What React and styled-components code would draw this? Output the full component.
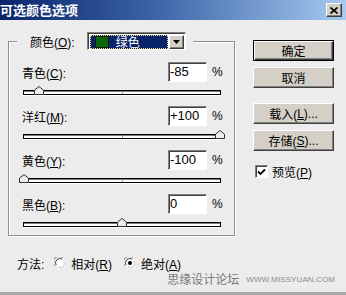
import React from 'react'
import styled, { createGlobalStyle, css } from 'styled-components'

const GlobalStyle = createGlobalStyle`
  html, body {
    margin: 0;
    padding: 0;
    background: #ececec;
  }
  body {
    font-family: "Liberation Sans", "Noto Sans CJK SC", sans-serif;
    font-size: 12px;
    color: #000;
  }
`

const Dialog = styled.div`
  width: 346px;
  height: 295px;
  box-sizing: border-box;
  background: #ececec;
  border-bottom: 3px solid #a9a9a9;
  display: flex;
  flex-direction: column;
  overflow: hidden;
`

const TitleBar = styled.div`
  height: 20px;
  flex: none;
  display: flex;
  align-items: center;
  justify-content: space-between;
  padding-right: 4px;
  background: linear-gradient(90deg, #0a246a 0%, #3c64a8 45%, #a6caf0 100%);
`

const Title = styled.span`
  color: #fff;
  font-weight: bold;
  font-size: 13px;
  font-family: "Noto Sans CJK SC", sans-serif;
  line-height: 20px;
`

const CloseButton = styled.div`
  width: 16px;
  height: 14px;
  box-sizing: border-box;
  display: flex;
  align-items: center;
  justify-content: center;
  background: #d4d0c8;
  border: 1px solid;
  border-color: #fff #404040 #404040 #fff;
  box-shadow: inset -1px -1px 0 #808080;
`

const Main = styled.div`
  display: flex;
  align-items: flex-start;
`

const LeftCol = styled.div`
  padding-left: 8px;
`

const GroupBox = styled.fieldset`
  margin: 12px 0 0;
  width: 227px;
  height: 204px;
  box-sizing: border-box;
  padding: 12px 0 0 0;
  border: 1px solid #8e8e8e;
  box-shadow: 1px 1px 0 #fff, inset 1px 1px 0 #fff;
`

const Legend = styled.legend`
  margin-left: 8px;
  padding: 0 7px 0 13px;
  background: #ececec;
  display: flex;
  align-items: center;
  gap: 12px;
  height: 18px;
`

const Select = styled.div`
  width: 99px;
  height: 18px;
  box-sizing: border-box;
  display: flex;
  align-items: center;
  padding: 1px 1px 1px 2px;
  background: #fff;
  border: 1px solid;
  border-color: #808080 #fff #fff #808080;
  box-shadow: inset 1px 1px 0 #404040;
`

const Selected = styled.div`
  flex: 1;
  height: 14px;
  box-sizing: border-box;
  display: flex;
  align-items: center;
  gap: 7px;
  padding-left: 5px;
  margin-top: 1px;
  background: #0a246a;
  outline: 1px dotted #f4e27a;
  outline-offset: -1px;
  color: #fff;
  font-family: "Noto Sans CJK SC", sans-serif;
`

const Swatch = styled.span`
  width: 14px;
  height: 12px;
  box-sizing: border-box;
  background: ${p => p.$color};
  border: 1px solid #0b1a0b;
`

const ArrowButton = styled.div`
  width: 15px;
  height: 14px;
  box-sizing: border-box;
  margin-left: 1px;
  margin-top: 1px;
  display: flex;
  align-items: center;
  justify-content: center;
  background: #d4d0c8;
  border: 1px solid;
  border-color: #fff #404040 #404040 #fff;
  box-shadow: inset -1px -1px 0 #808080;
`

const Row = styled.div`
  margin-left: 13px;
  width: 199px;
  height: 44px;
`

const RowHead = styled.div`
  display: grid;
  grid-template-columns: 146px 39px auto;
  align-items: center;
  height: 20px;
`

const NumberBox = styled.div`
  height: 20px;
  box-sizing: border-box;
  padding: 1px 0 0 1px;
  background: #fff;
  border: 1px solid;
  border-color: #808080 #fff #fff #808080;
  box-shadow: inset 1px 1px 0 #404040;
  font-size: 13px;
  line-height: 16px;
`

const Percent = styled.span`
  margin-left: 5px;
`

const Track = styled.div`
  position: relative;
  margin-top: 8px;
  margin-left: 1px;
  width: 198px;
  height: 5px;
  box-sizing: border-box;
  background: #fff;
  border: 1px solid #000;
  box-shadow: inset 0 1px 0 #7a7a7a, 0 1px 0 #fff;

  &::after {
    content: '';
    position: absolute;
    left: 50%;
    top: 0;
    bottom: 0;
    width: 1px;
    background: #9a9a9a;
  }
`

const Thumb = styled.div`
  position: absolute;
  bottom: -1px;
  width: 10px;
  height: 9px;
  transform: translateX(-50%);
  z-index: 1;
  svg { display: block; }
`

const SideBar = styled.div`
  margin-left: 18px;
  padding-top: 20px;
  width: 81px;
  display: flex;
  flex-direction: column;
`

const Button = styled.div`
  width: 81px;
  height: 21px;
  box-sizing: border-box;
  margin-top: ${p => p.$gap || 0}px;
  display: flex;
  align-items: center;
  justify-content: center;
  background: #d4d0c8;
  font-size: 12px;
  border: 1px solid;
  border-color: #fff #404040 #404040 #fff;
  box-shadow: inset -1px -1px 0 #808080;
  ${p => p.$default && css`
    border-color: #000;
    box-shadow: inset 1px 1px 0 #fff, inset -1px -1px 0 #404040, inset -2px -2px 0 #808080;
  `}
`

const CheckRow = styled.label`
  margin-top: 14px;
  margin-left: 2px;
  display: flex;
  align-items: center;
  gap: 4px;
  height: 13px;
`

const Box = styled.span`
  width: 13px;
  height: 13px;
  box-sizing: border-box;
  display: flex;
  align-items: center;
  justify-content: center;
  background: #fff;
  border: 1px solid;
  border-color: #808080 #fff #fff #808080;
  box-shadow: inset 1px 1px 0 #404040;
`

const MethodRow = styled.div`
  margin-top: 19px;
  padding-left: 17px;
  height: 16px;
  display: flex;
  align-items: center;
`

const Radio = styled.span`
  display: flex;
  align-items: center;
  gap: 5px;
  margin-left: ${p => p.$gap}px;
  svg { display: block; }
`

const Watermark = styled.div`
  margin-top: 3px;
  padding-right: 11px;
  height: 12px;
  display: flex;
  justify-content: flex-end;
  align-items: center;
  gap: 7px;
  color: #7a7a7a;
  font-size: 12px;
  line-height: 12px;
`

const Site = styled.span`
  font-size: 8px;
  letter-spacing: 0.1px;
  color: #8a8a8a;
`

const Key = ({ k }) => <u style={{ textDecorationThickness: '1px' }}>{k}</u>

const channels = [
  { name: '青色', key: 'C', value: -85 },
  { name: '洋红', key: 'M', value: 100 },
  { name: '黄色', key: 'Y', value: -100 },
  { name: '黑色', key: 'B', value: 0 },
]

const fmt = v => (v > 0 ? '+' + v : String(v))

function RadioDot({ checked }) {
  return (
    <svg width="12" height="12" viewBox="0 0 12 12">
      <path d="M1 9 A5.5 5.5 0 0 1 9 1" fill="none" stroke="#808080" strokeWidth="1" />
      <path d="M3 11 A5.5 5.5 0 0 0 11 3" fill="none" stroke="#ffffff" strokeWidth="1" />
      <circle cx="6" cy="6" r="4.5" fill="#fff" />
      <path d="M2.2 8 A4.2 4.2 0 0 1 8 2.2" fill="none" stroke="#404040" strokeWidth="1" />
      <path d="M4 9.8 A4.2 4.2 0 0 0 9.8 4" fill="none" stroke="#d4d0c8" strokeWidth="1" />
      {checked && <circle cx="6" cy="6" r="2" fill="#000" />}
    </svg>
  )
}

export default function App() {
  return (
    <>
      <GlobalStyle />
      <Dialog>
        <TitleBar>
          <Title>可选颜色选项</Title>
          <CloseButton>
            <svg width="8" height="7" viewBox="0 0 8 7">
              <path d="M0.5 0.5 L7.5 6.5 M7.5 0.5 L0.5 6.5" stroke="#000" strokeWidth="1.6" />
            </svg>
          </CloseButton>
        </TitleBar>
        <Main>
          <LeftCol>
            <GroupBox>
              <Legend>
                <span>颜色(<Key k="O" />):</span>
                <Select>
                  <Selected>
                    <Swatch $color="#0b650b" />
                    <span>绿色</span>
                  </Selected>
                  <ArrowButton>
                    <svg width="7" height="4" viewBox="0 0 7 4">
                      <path d="M0 0 H7 L3.5 4 Z" fill="#000" />
                    </svg>
                  </ArrowButton>
                </Select>
              </Legend>
              {channels.map(c => (
                <Row key={c.key}>
                  <RowHead>
                    <span>{c.name}(<Key k={c.key} />):</span>
                    <NumberBox>{fmt(c.value)}</NumberBox>
                    <Percent>%</Percent>
                  </RowHead>
                  <Track>
                    <Thumb style={{ left: ((c.value + 100) / 2) + '%' }}>
                      <svg width="10" height="9" viewBox="0 0 10 9">
                        <path d="M0.5 8.5 V4.2 L5 0.5 L9.5 4.2 V8.5 Z" fill="#ededed" stroke="#333" />
                      </svg>
                    </Thumb>
                  </Track>
                </Row>
              ))}
            </GroupBox>
          </LeftCol>
          <SideBar>
            <Button $default>确定</Button>
            <Button $gap={6}>取消</Button>
            <Button $gap={15}>载入(<Key k="L" />)...</Button>
            <Button $gap={6}>存储(<Key k="S" />)...</Button>
            <CheckRow>
              <Box>
                <svg width="9" height="8" viewBox="0 0 9 8">
                  <path d="M1 3.5 L3.5 6 L8 1.5" fill="none" stroke="#000" strokeWidth="1.8" />
                </svg>
              </Box>
              <span>预览(<Key k="P" />)</span>
            </CheckRow>
          </SideBar>
        </Main>
        <MethodRow>
          <span>方法:</span>
          <Radio $gap={10}>
            <RadioDot />
            <span>相对(<Key k="R" />)</span>
          </Radio>
          <Radio $gap={12}>
            <RadioDot checked />
            <span>绝对(<Key k="A" />)</span>
          </Radio>
        </MethodRow>
        <Watermark>
          <span>思缘设计论坛</span>
          <Site>WWW.MISSYUAN.COM</Site>
        </Watermark>
      </Dialog>
    </>
  )
}
